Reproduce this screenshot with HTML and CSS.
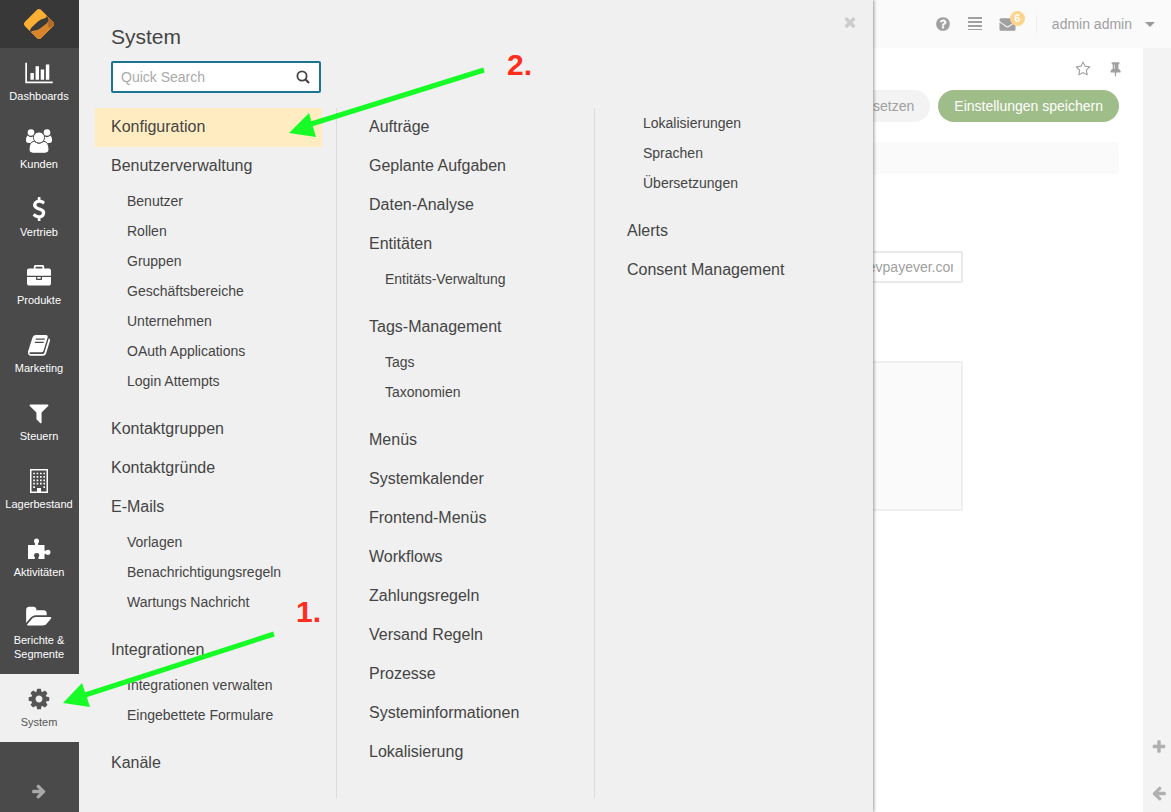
FILE: index.html
```html
<!DOCTYPE html>
<html lang="de">
<head>
<meta charset="utf-8">
<title>System</title>
<link rel="stylesheet" href="styles.css">
</head>
<body>
<div class="app">
  <nav class="sidebar" aria-label="Hauptmenü">
    <a class="logo" href="#" aria-label="Startseite">
      <svg width="32" height="32" viewBox="0 0 32 32">
        <defs><clipPath id="diamond"><rect x="4.500" y="4.500" width="23" height="23" rx="3.500" transform="rotate(45 16 16)"/></clipPath></defs>
        <g clip-path="url(#diamond)">
          <path fill="#fbb034" d="M0 0h32v32H0z"/>
          <path fill="#d9852b" d="M32 8v24H4l3-6L25 9z"/>
          <path fill="#b06c28" d="M23 6l11 8-7 6q-3-1-2-8z"/>
          <path fill="#3a3a3a" d="M7.500 26.500Q5.500 22.500 9 19L15 13.500Q18 11 21 10.500Q24 9.800 23.500 7.500Q27 12 23.500 15.500L17 20.500Q14 22.500 11.500 22.500Q7 23 7.500 26.500z"/>
        </g>
      </svg>
    </a>
    <ul class="nav">
      <li><a class="nav-item" href="#"><svg width="28" height="24" viewBox="0 0 2048 1792"><path d="M640 896v512h-256v-512h256zm384-512v1024h-256v-1024h256zm1024 1152v128h-2048v-1536h128v1408h1920zm-640-896v768h-256v-768h256zm384-384v1152h-256v-1152h256z"/></svg><span>Dashboards</span></a></li>
      <li><a class="nav-item" href="#"><svg width="26" height="24" viewBox="0 0 26 24"><circle cx="5" cy="3.500" r="3.300"/><circle cx="21" cy="3.500" r="3.300"/><path d="M1.500 6.500Q5 9.500 8 7V14H3Q0 14 0 11.500Q0 8 1.500 6.500zM24.500 6.500Q21 9.500 18 7V14H23Q26 14 26 11.500Q26 8 24.500 6.500z"/><path class="cutout" d="M8.600 12.300Q13 16 17.400 12.300Q23 12.700 23 20.500Q23 24.300 19 24.300H7Q3 24.300 3 20.500Q3 12.700 8.600 12.300z"/><circle class="cutout" cx="13" cy="8.500" r="5.600"/></svg><span>Kunden</span></a></li>
      <li><a class="nav-item" href="#"><svg width="24" height="24" viewBox="0 0 1792 1792"><path d="M1362 1185q0 153-99.500 263.500t-258.500 136.500v175q0 14-9 23t-23 9h-135q-13 0-22.500-9.500t-9.500-22.500v-175q-66-9-127.500-31t-101.500-44.500-74-48-46.500-37.500-17.500-18q-17-21-2-41l103-135q7-10 23-12 15-2 24 9l2 2q113 99 243 125 37 8 74 8 81 0 142.500-43t61.500-122q0-28-15-53t-33.500-42-58.500-37.500-66-32-80-32.500q-39-16-61.500-25t-61.500-26.500-62.500-31-56.500-35.500-53.500-42.500-43.500-49-35.500-58-21-66.500-8.500-78q0-138 98-242t255-134v-180q0-13 9.500-22.500t22.500-9.500h135q14 0 23 9t9 23v176q57 6 110.500 23t87 33.500 63.500 37.500 39 29 15 14q17 18 5 38l-81 146q-8 15-23 16-14 3-27-7-3-3-14.500-12t-39-26.500-58.500-32-74.500-26-85.500-11.500q-95 0-155 43t-60 111q0 26 8.500 48t29.500 41.500 39.500 33 56 31 60.500 27 70 27.500q53 20 81 31.500t76 35 75.500 42.500 62 50 53 63.500 31.500 76.500 13 94z"/></svg><span>Vertrieb</span></a></li>
      <li><a class="nav-item" href="#"><svg width="24" height="24" viewBox="0 0 1792 1792"><path d="M640 256h512v-128h-512v128zm1152 640v480q0 66-47 113t-113 47h-1472q-66 0-113-47t-47-113v-480h672v160q0 26 19 45t45 19h320q26 0 45-19t19-45v-160h672zm-768 0v128h-256v-128h256zm768-480v384h-1792v-384q0-66 47-113t113-47h352v-160q0-40 28-68t68-28h576q40 0 68 28t28 68v160h352q66 0 113 47t47 113z"/></svg><span>Produkte</span></a></li>
      <li><a class="nav-item" href="#"><svg width="24" height="24" viewBox="0 0 24 24"><path fill-rule="evenodd" d="M8.500 2H19Q21.300 2 20.600 4.500L16.500 17.800Q16 19.300 14.500 19.300H3.500Q2 19.300 2.300 20.200Q2.600 21 4 21H15.500Q17 21 17.400 19.700L21.800 5.300Q23.500 6 22.900 8L19 20.700Q18.300 22.700 16 22.700H4Q1.200 22.700 1 19.500Q.8 18.500 1.500 17L5.500 4.500Q6.300 2 8.500 2zM9 5.500L8.600 6.800H17.600L18 5.500zM8 8.700L7.600 10H16.600L17 8.700z"/></svg><span>Marketing</span></a></li>
      <li><a class="nav-item" href="#"><svg width="24" height="24" viewBox="0 0 1792 1792"><path d="M1595 295q17 41-14 70l-493 493v742q0 42-39 59-13 5-25 5-27 0-45-19l-256-256q-19-19-19-45v-486l-493-493q-31-29-14-70 17-39 59-39h1280q42 0 59 39z"/></svg><span>Steuern</span></a></li>
      <li><a class="nav-item" href="#"><svg width="24" height="24" viewBox="0 0 24 24"><path fill-rule="evenodd" d="M3 0H21V24H3zM4.500 1.500V22.500H10V19H14V22.500H19.500V1.500z"/><path fill="none" stroke="#fff" stroke-width="1.700" stroke-dasharray="1.700 1.700" d="M6.200 4.500H18M6.200 7.900H18M6.200 11.300H18M6.200 14.700H18M6.200 18.100H9M16.400 18.100H18"/></svg><span>Lagerbestand</span></a></li>
      <li><a class="nav-item" href="#"><svg width="24" height="24" viewBox="0 0 24 24"><path d="M1 8H7.500Q8.600 7.700 8 6.500Q7 5.500 7 4Q7 1.500 9.500 1.500T12 4Q12 5.500 11 6.500Q10.500 7.700 11.500 8H17.500V12.500Q17.700 14.600 19 13.500Q20 12.700 21.200 12.700Q23.500 12.700 23.500 15.300T21.200 18Q20 18 19 17.200Q17.700 16.200 17.500 18V22H12Q10.800 21.600 11.500 20.300Q12.300 19.500 12.300 18.300Q12.300 16 9.700 16T7 18.300Q7 19.500 7.800 20.300Q8.500 21.600 7.300 22H1z"/></svg><span>Aktivitäten</span></a></li>
      <li><a class="nav-item" href="#"><svg width="26" height="24" viewBox="0 0 1920 1792"><path d="M1879 952q0 31-31 66l-336 396q-43 51-120.500 86.500t-143.500 35.500h-1088q-34 0-60.500-13t-26.500-43q0-31 31-66l336-396q43-51 120.500-86.500t143.500-35.500h1088q34 0 60.500 13t26.500 43zm-343-344v160h-832q-94 0-197 47.500t-164 119.500l-337 396-5 6q0-4-.5-12.500t-.5-12.500v-960q0-92 66-158t158-66h320q92 0 158 66t66 158v32h544q92 0 158 66t66 158z"/></svg><span>Berichte &amp; Segmente</span></a></li>
      <li><a class="nav-item active" href="#" aria-current="page"><svg width="24" height="24" viewBox="0 0 1792 1792"><path d="M1152 896q0-106-75-181t-181-75-181 75-75 181 75 181 181 75 181-75 75-181zm512-109v222q0 12-8 23t-20 13l-185 28q-19 54-39 91 35 50 107 138 10 12 10 25t-9 23q-27 37-99 108t-94 71q-12 0-26-9l-138-108q-44 23-91 38-16 136-29 186-7 28-36 28h-222q-14 0-24.500-8.500t-11.500-21.500l-28-184q-49-16-90-37l-141 107q-10 9-25 9-14 0-25-11-126-114-165-168-7-10-7-23 0-12 8-23 15-21 51-66.500t54-70.500q-27-50-41-99l-183-27q-13-2-21-12.500t-8-23.500v-222q0-12 8-23t19-13l186-28q14-46 39-92-40-57-107-138-10-12-10-24 0-10 9-23 26-36 98.500-107.500t94.500-71.500q13 0 26 10l138 107q44-23 91-38 16-136 29-186 7-28 36-28h222q14 0 24.500 8.500t11.500 21.500l28 184q49 16 90 37l142-107q9-9 24-9 13 0 25 10 129 119 165 170 7 8 7 22 0 12-8 23-15 21-51 66.500t-54 70.500q26 50 41 98l183 28q13 2 21 12.500t8 23.500z"/></svg><span>System</span></a></li>
    </ul>
    <button class="expand" type="button" aria-label="Menü ausklappen"><svg width="16" height="16" viewBox="0 0 1792 1792"><path d="M1600 960q0 54-37 91l-651 651q-39 37-91 37-51 0-90-37l-75-75q-38-38-38-91t38-91l293-293h-704q-52 0-84.500-37.500t-32.500-90.500v-128q0-53 32.500-90.500t84.500-37.500h704l-293-294q-38-36-38-90t38-90l75-75q38-38 90-38 53 0 91 38l651 651q37 35 37 90z"/></svg></button>
  </nav>

  <div class="page">
    <header class="topbar">
      <button class="icon-btn" type="button" aria-label="Hilfe"><svg width="16" height="16" viewBox="0 0 1792 1792"><path d="M1024 1376v-192q0-14-9-23t-23-9h-192q-14 0-23 9t-9 23v192q0 14 9 23t23 9h192q14 0 23-9t9-23zm256-672q0-88-55.500-163t-138.500-116-170-41q-243 0-371 213-15 24 8 42l132 100q7 6 19 6 16 0 25-12 53-68 86-92 34-24 86-24 48 0 85.500 26t37.500 59q0 38-20 61t-68 45q-63 28-115.500 86.500t-52.500 125.500v36q0 14 9 23t23 9h192q14 0 23-9t9-23q0-19 21.500-49.500t54.500-49.500q32-18 49-28.500t46-35 44.500-48 28-60.500 12.500-81zm384 192q0 209-103 385.500t-279.500 279.500-385.500 103-385.500-103-279.500-279.500-103-385.500 103-385.500 279.500-279.500 385.500-103 385.500 103 279.500 279.500 103 385.500z"/></svg></button>
      <button class="icon-btn" type="button" aria-label="Liste"><svg width="16" height="16" viewBox="0 0 16 16"><path d="M1 1h14v2H1zM1 5h14v2H1zM1 9h14v2H1zM1 13h14v1H1z"/></svg></button>
      <button class="icon-btn mail" type="button" aria-label="Nachrichten"><svg width="17" height="16" viewBox="0 0 1792 1792"><path d="M1792 710v794q0 66-47 113t-113 47h-1472q-66 0-113-47t-47-113v-794q44 49 101 87 362 246 497 345 57 42 92.500 65.500t94.500 48 110 24.500h2q51 0 110-24.500t94.500-48 92.500-65.500q170-123 498-345 57-39 100-87zm0-294q0 79-49 151t-122 123q-376 261-468 325-10 7-42.500 30.500t-54 38-52 32.500-57.500 27-50 9h-2q-23 0-50-9t-57.500-27-52-32.500-54-38-42.500-30.500q-91-64-262-182.500t-205-142.500q-62-42-117-115.500t-55-136.500q0-78 41.500-130t118.500-52h1472q65 0 112.500 47t47.500 113z"/></svg><span class="badge">6</span></button>
      <button class="user" type="button">admin admin<span class="caret"></span></button>
    </header>
    <div class="body">
      <main class="content">
        <div class="page-tools">
          <button class="icon-btn" type="button" aria-label="Favorit"><svg width="16" height="16" viewBox="0 0 1792 1792"><path d="M1201 1004l306-297-422-62-189-382-189 382-422 62 306 297-73 421 378-199 377 199zm527-357q0 22-26 48l-363 354 86 500q1 7 1 20 0 50-41 50-19 0-40-12l-449-236-449 236q-22 12-40 12-21 0-31.500-14.500t-10.500-35.500q0-6 2-20l86-500-364-354q-25-27-25-48 0-37 56-46l502-73 225-455q19-41 49-41t49 41l225 455 502 73q56 9 56 46z"/></svg></button>
          <button class="icon-btn" type="button" aria-label="Anheften"><svg width="16" height="16" viewBox="0 0 1664 1792"><path d="M800 864v-448q0-14-9-23t-23-9-23 9-9 23v448q0 14 9 23t23 9 23-9 9-23zm672 352q0 26-19 45t-45 19h-429l-51 483q-2 12-10.500 20.500t-20.500 8.500h-1q-27 0-32-27l-76-485h-404q-26 0-45-19t-19-45q0-123 78.500-221.500t177.500-98.500v-512q-52 0-90-38t-38-90 38-90 90-38h640q52 0 90 38t38 90-38 90-90 38v512q99 0 177.500 98.500t78.500 221.500z"/></svg></button>
        </div>
        <div class="actions">
          <button class="btn" type="button">Zurücksetzen</button>
          <button class="btn primary" type="button">Einstellungen speichern</button>
        </div>
        <div class="strip"></div>
        <form class="form">
          <input class="field" type="text" value="devpayever.com" aria-label="URL">
          <textarea class="area" aria-label="Text" disabled></textarea>
        </form>
      </main>
      <aside class="rail">
        <button class="icon-btn" type="button" aria-label="Hinzufügen"><svg width="16" height="16" viewBox="0 0 1792 1792"><path d="M1600 736v192q0 40-28 68t-68 28h-416v416q0 40-28 68t-68 28h-192q-40 0-68-28t-28-68v-416h-416q-40 0-68-28t-28-68v-192q0-40 28-68t68-28h416v-416q0-40 28-68t68-28h192q40 0 68 28t28 68v416h416q40 0 68 28t28 68z"/></svg></button>
        <button class="icon-btn" type="button" aria-label="Einblenden"><svg width="16" height="16" viewBox="0 0 1792 1792"><path transform="matrix(-1 0 0 1 1792 0)" d="M1600 960q0 54-37 91l-651 651q-39 37-91 37-51 0-90-37l-75-75q-38-38-38-91t38-91l293-293h-704q-52 0-84.500-37.500t-32.500-90.500v-128q0-53 32.500-90.500t84.500-37.500h704l-293-294q-38-36-38-90t38-90l75-75q38-38 90-38 53 0 91 38l651 651q37 35 37 90z"/></svg></button>
      </aside>
    </div>
  </div>

  <section class="menu" aria-label="System">
    <button class="close" type="button" aria-label="Schließen"><svg width="16" height="16" viewBox="0 0 1792 1792"><path d="M1490 1322q0 40-28 68l-136 136q-28 28-68 28t-68-28l-294-294-294 294q-28 28-68 28t-68-28l-136-136q-28-28-28-68t28-68l294-294-294-294q-28-28-28-68t28-68l136-136q28-28 68-28t68 28l294 294 294-294q28-28 68-28t68 28l136 136q28 28 28 68t-28 68l-294 294 294 294q28 28 28 68z"/></svg></button>
    <h1 class="menu-title">System</h1>
    <form class="search">
      <input type="text" placeholder="Quick Search" aria-label="Quick Search">
      <button type="submit" aria-label="Suchen"><svg width="14" height="14" viewBox="0 0 14 14"><circle cx="6" cy="6" r="4.600" fill="none" stroke="currentColor" stroke-width="1.800"/><path fill="none" stroke="currentColor" stroke-width="2.200" d="M9.300 9.300L13 13"/></svg></button>
    </form>
    <div class="columns">
      <ul class="col">
        <li><a class="current" href="#">Konfiguration</a></li>
        <li><a href="#">Benutzerverwaltung</a>
          <ul class="sub">
            <li><a href="#">Benutzer</a></li>
            <li><a href="#">Rollen</a></li>
            <li><a href="#">Gruppen</a></li>
            <li><a href="#">Geschäftsbereiche</a></li>
            <li><a href="#">Unternehmen</a></li>
            <li><a href="#">OAuth Applications</a></li>
            <li><a href="#">Login Attempts</a></li>
          </ul>
        </li>
        <li><a href="#">Kontaktgruppen</a></li>
        <li><a href="#">Kontaktgründe</a></li>
        <li><a href="#">E-Mails</a>
          <ul class="sub">
            <li><a href="#">Vorlagen</a></li>
            <li><a href="#">Benachrichtigungsregeln</a></li>
            <li><a href="#">Wartungs Nachricht</a></li>
          </ul>
        </li>
        <li><a href="#">Integrationen</a>
          <ul class="sub">
            <li><a href="#">Integrationen verwalten</a></li>
            <li><a href="#">Eingebettete Formulare</a></li>
          </ul>
        </li>
        <li><a href="#">Kanäle</a></li>
      </ul>
      <ul class="col">
        <li><a href="#">Aufträge</a></li>
        <li><a href="#">Geplante Aufgaben</a></li>
        <li><a href="#">Daten-Analyse</a></li>
        <li><a href="#">Entitäten</a>
          <ul class="sub">
            <li><a href="#">Entitäts-Verwaltung</a></li>
          </ul>
        </li>
        <li><a href="#">Tags-Management</a>
          <ul class="sub">
            <li><a href="#">Tags</a></li>
            <li><a href="#">Taxonomien</a></li>
          </ul>
        </li>
        <li><a href="#">Menüs</a></li>
        <li><a href="#">Systemkalender</a></li>
        <li><a href="#">Frontend-Menüs</a></li>
        <li><a href="#">Workflows</a></li>
        <li><a href="#">Zahlungsregeln</a></li>
        <li><a href="#">Versand Regeln</a></li>
        <li><a href="#">Prozesse</a></li>
        <li><a href="#">Systeminformationen</a></li>
        <li><a href="#">Lokalisierung</a></li>
      </ul>
      <ul class="col">
        <li>
          <ul class="sub">
            <li><a href="#">Lokalisierungen</a></li>
            <li><a href="#">Sprachen</a></li>
            <li><a href="#">Übersetzungen</a></li>
          </ul>
        </li>
        <li><a href="#">Alerts</a></li>
        <li><a href="#">Consent Management</a></li>
      </ul>
    </div>
  </section>

  <svg class="arrow arrow-two" width="198" height="72" viewBox="0 0 198 72"><path stroke="#17fc26" stroke-width="5" d="M196 4L20 59"/><path fill="#17fc26" d="M1 67L21 47L28 71z"/></svg>
  <span class="step step-two">2.</span>
  <svg class="arrow arrow-one" width="214" height="78" viewBox="0 0 214 78"><path stroke="#17fc26" stroke-width="5" d="M212 4L20 66"/><path fill="#17fc26" d="M1 73L20 53L28 77z"/></svg>
  <span class="step step-one">1.</span>
</div>
</body>
</html>
```

FILE: styles.css
```css
* { box-sizing: border-box; }

body {
  margin: 0;
  background: #fff;
  color: #444;
  font: 14px/18px "Liberation Sans", Arial, sans-serif;
}

ul { list-style: none; margin: 0; padding: 0; }
a { color: inherit; text-decoration: none; }
button, input, textarea { font: inherit; color: inherit; }
button { border: 0; padding: 0; background: none; cursor: pointer; }
svg { display: block; fill: currentColor; }

.app { position: relative; display: flex; min-height: 100vh; }

/* Sidebar */
.sidebar {
  display: flex;
  flex-direction: column;
  flex: none;
  width: 79px;
  background: #4a4a4b;
  color: #fff;
}
.logo {
  display: flex;
  align-items: center;
  justify-content: center;
  height: 48px;
  padding-right: 1px;
  background: #383838;
}
.nav-item {
  display: flex;
  flex-direction: column;
  align-items: center;
  gap: 4px;
  padding: 13px 5px 13px 4px;
  font-size: 11px;
  line-height: 14px;
  text-align: center;
}
.nav-item.active { background: #f0f0f0; color: #555; }
.cutout { stroke: #4a4a4b; stroke-width: 1; }
.expand {
  display: flex;
  justify-content: center;
  margin-top: auto;
  padding: 13px 14px 13px 13px;
  color: #a8a8a8;
}

/* Page behind the menu */
.page { display: flex; flex-direction: column; flex: 1; min-width: 0; color: #a0a0a0; }
.topbar {
  display: flex;
  align-items: center;
  justify-content: flex-end;
  gap: 16px;
  height: 48px;
  padding-right: 16px;
  background: #fafafa;
}
.mail { position: relative; }
.badge {
  position: absolute;
  top: -5px;
  left: 11px;
  width: 15px;
  height: 15px;
  border-radius: 50%;
  background: #fcd48c;
  color: #fff;
  font-size: 11px;
  font-weight: 700;
  line-height: 15px;
}
.user {
  display: flex;
  align-items: center;
  gap: 13px;
  margin-left: 4px;
  padding-left: 15px;
  border-left: 1px solid #eee;
}
.caret { border: 5px solid transparent; border-top-color: #999; border-bottom: 0; }
.body { display: flex; flex: 1; }
.content { flex: 1; padding: 13px 24px 24px; }
.page-tools { display: flex; justify-content: flex-end; gap: 16px; margin-right: -4px; }
.actions { display: flex; justify-content: flex-end; gap: 8px; margin: 13px 0 20px; }
.btn { height: 32px; padding: 0 16px; border-radius: 16px; background: #f3f3f3; }
.btn.primary { background: #9fbd89; color: #fff; }
.strip { height: 32px; border-radius: 4px; background: #fafafa; }
.form {
  display: flex;
  flex-direction: column;
  align-items: flex-end;
  gap: 78px;
  padding: 77px 156px 0 0;
}
.field {
  width: 113px;
  height: 32px;
  padding: 0 8px;
  border: 2px solid #e9e9e9;
  border-radius: 2px;
}
.area {
  width: 320px;
  height: 150px;
  border: 2px solid #eee;
  border-radius: 2px;
  background: #fafafa;
  resize: none;
}
.rail {
  display: flex;
  flex-direction: column;
  align-items: flex-end;
  justify-content: flex-end;
  gap: 30px;
  width: 28px;
  padding: 0 4px 11px 0;
  background: #f3f3f3;
  color: #b0b0b0;
}

/* Menu panel */
.menu {
  position: absolute;
  top: 0;
  bottom: 0;
  left: 79px;
  display: flex;
  flex-direction: column;
  width: 794px;
  padding: 24px 20px 14px 0;
  background: #f0f0f0;
  box-shadow: 1px 0 3px rgba(0, 0, 0, .4);
  clip-path: inset(0 -8px 0 0);
}
.close { position: absolute; top: 14px; right: 15px; color: #ccc; }
.menu-title { margin: 0 0 12px 32px; font-size: 21px; font-weight: 400; line-height: 25px; }
.search {
  display: flex;
  align-items: center;
  width: 210px;
  height: 32px;
  margin: 0 0 15px 32px;
  padding: 0 9px 0 8px;
  border: 2px solid #1b7492;
  border-radius: 2px;
  background: #fff;
}
.search input { flex: 1; min-width: 0; padding: 0; border: 0; outline: 0; background: none; }
.search input::placeholder { color: #aaa; opacity: 1; }
.columns { display: grid; grid-template-columns: repeat(3, 1fr); flex: 1; }
.col { padding: 0 14px 0 16px; border-right: 1px solid #dcdcdc; }
.col:last-child { border-right: 0; }
.col a { display: block; padding: 9px 16px 10px; font-size: 16px; line-height: 20px; }
.col a.current { background: #ffedc1; }
.sub { padding: 0 0 14px 16px; }
.col .sub a { padding: 6px 16px; font-size: 14px; line-height: 18px; }

/* Callouts drawn over the page */
.arrow, .step { position: absolute; }
.arrow-two { left: 288px; top: 66px; }
.arrow-one { left: 62px; top: 630px; }
.step { color: #ff2d1c; font-size: 30px; font-weight: 700; line-height: 30px; }
.step-two { left: 507px; top: 50px; }
.step-one { left: 296px; top: 597px; }
```
